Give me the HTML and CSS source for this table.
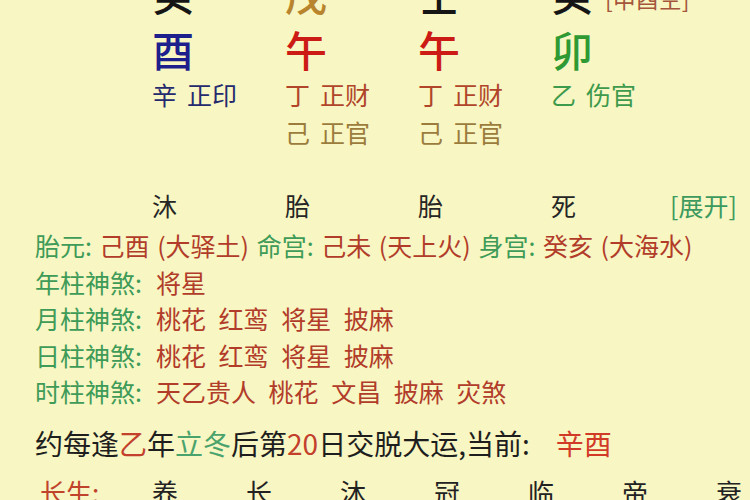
FILE: index.html
```html
<!DOCTYPE html>
<html lang="zh-CN">
<head>
<meta charset="utf-8">
<link rel="stylesheet" href="styles.css">
</head>
<body>
<div class="sheet">
  <div class="prow big r1">
    <span class="k">癸</span>
    <span class="earth">戊</span>
    <span class="k">壬</span>
    <span class="k">癸<span class="void">[申酉空]</span></span>
  </div>
  <div class="prow big r2">
    <span class="metal">酉</span>
    <span class="fire">午</span>
    <span class="fire">午</span>
    <span class="wood">卯</span>
  </div>
  <div class="prow sub r3">
    <span class="navy">辛<span class="gap">正印</span></span>
    <span class="rust">丁<span class="gap">正财</span></span>
    <span class="rust">丁<span class="gap">正财</span></span>
    <span class="leaf">乙<span class="gap">伤官</span></span>
  </div>
  <div class="prow sub r4">
    <span></span>
    <span class="olive">己<span class="gap">正官</span></span>
    <span class="olive">己<span class="gap">正官</span></span>
    <span></span>
  </div>
  <div class="prow stage">
    <span>沐</span>
    <span>胎</span>
    <span>胎</span>
    <span>死</span>
    <span class="expand">[展开]</span>
  </div>
  <div class="info">
    <p class="line birth"><span class="lab">胎元:</span> <span class="val">己酉 (大驿土)</span> <span class="lab">命宫:</span> <span class="val">己未 (天上火)</span> <span class="lab">身宫:</span> <span class="val">癸亥 (大海水)</span></p>
    <p class="line"><span class="lab">年柱神煞:</span><span class="val sha">将星</span></p>
    <p class="line"><span class="lab">月柱神煞:</span><span class="val sha">桃花 红鸾 将星 披麻</span></p>
    <p class="line"><span class="lab">日柱神煞:</span><span class="val sha">桃花 红鸾 将星 披麻</span></p>
    <p class="line"><span class="lab">时柱神煞:</span><span class="val sha">天乙贵人 桃花 文昌 披麻 灾煞</span></p>
  </div>
  <p class="luck">约每逢<span class="red">乙</span>年<span class="green">立冬</span>后第<span class="red">20</span>日交脱大运,当前:<span class="cur">辛酉</span></p>
  <div class="cycle">
    <span class="clab">长生:</span>
    <span>养</span><span>长</span><span>沐</span><span>冠</span><span>临</span><span>帝</span><span>衰</span>
  </div>
</div>
</body>
</html>
```

FILE: styles.css
```css
html, body {
  margin: 0;
  padding: 0;
}
body {
  width: 750px;
  height: 500px;
  overflow: hidden;
  background: #f8f6c2;
  font-family: "Noto Sans CJK SC", "Noto Sans", sans-serif;
  color: #222;
}
.sheet {
  margin-top: -29px;
  padding: 0 13px 0 35px;
}
.prow {
  display: grid;
  grid-template-columns: 117px 133px 133px 133px 1fr auto;
  white-space: nowrap;
}
.prow > span:first-child {
  grid-column: 2;
}
.big {
  font-size: 42px;
  font-weight: 500;
}
.r1 { line-height: 44px; }
.r2 { line-height: 57px; }
.sub {
  font-size: 25px;
}
.r3 { line-height: 34px; }
.r4 { line-height: 42px; }
.gap { margin-left: 10px; }
.k { color: #151515; }
.earth { color: #b8852e; }
.metal { color: #1c1f8c; }
.fire { color: #cc1a14; }
.wood { color: #2f9a34; }
.navy { color: #252a6e; }
.rust { color: #b0452a; }
.olive { color: #9b7c3c; }
.leaf { color: #3e9a4c; }
.void {
  font-size: 23px;
  font-weight: 400;
  color: #a4553c;
  margin-left: 12px;
  vertical-align: 3px;
}
.stage {
  margin-top: 34px;
  font-size: 25px;
  line-height: 36px;
  color: #262626;
}
.expand {
  color: #3d9a5e;
}
.info {
  margin-top: 4px;
}
.line {
  margin: 0;
  font-size: 25px;
  line-height: 36.5px;
  white-space: nowrap;
}
.birth {
  word-spacing: 2px;
}
.sha {
  margin-left: 14px;
  word-spacing: 7px;
}
.lab { color: #3e9b58; }
.val { color: #b23c2a; }
.luck {
  margin: 13px 0 0;
  font-size: 28px;
  line-height: 40px;
  color: #1e1e1e;
  white-space: nowrap;
}
.red { color: #c2402c; }
.green { color: #4aa36c; }
.cur {
  color: #d23a28;
  margin-left: 26px;
}
.cycle {
  margin-top: 9px;
  display: grid;
  grid-template-columns: 117px repeat(7, 94px);
  font-size: 26px;
  line-height: 40px;
  color: #222;
  white-space: nowrap;
}
.clab { color: #c0432c; margin-left: 5px; }
```
